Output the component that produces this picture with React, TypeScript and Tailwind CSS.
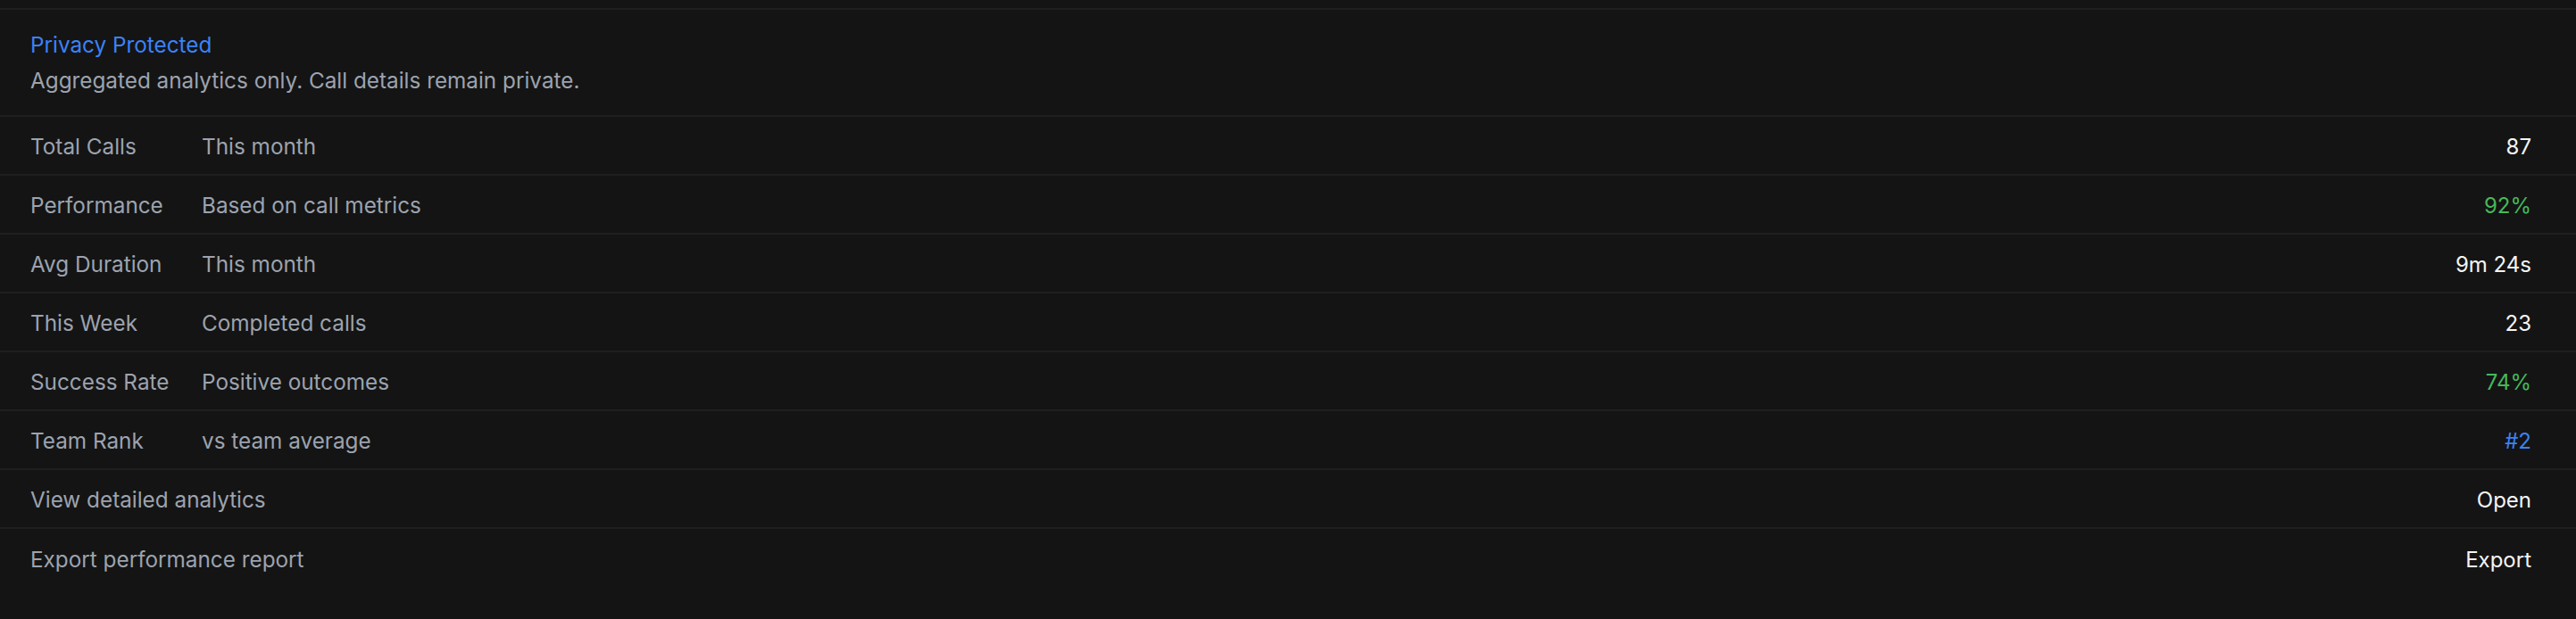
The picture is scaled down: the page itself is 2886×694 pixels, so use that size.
import React from 'react';

type Row = {
  label: string;
  hint?: string;
  value: string;
  tone?: 'white' | 'green' | 'blue';
};

const rows: Row[] = [
  { label: 'Total Calls', hint: 'This month', value: '87' },
  { label: 'Performance', hint: 'Based on call metrics', value: '92%', tone: 'green' },
  { label: 'Avg Duration', hint: 'This month', value: '9m 24s' },
  { label: 'This Week', hint: 'Completed calls', value: '23' },
  { label: 'Success Rate', hint: 'Positive outcomes', value: '74%', tone: 'green' },
  { label: 'Team Rank', hint: 'vs team average', value: '#2', tone: 'blue' },
  { label: 'View detailed analytics', value: 'Open' },
  { label: 'Export performance report', value: 'Export' },
];

const toneClass = {
  white: 'text-[#f4f4f5]',
  green: 'text-[#46b85a]',
  blue: 'text-[#3b82f6]',
};

export default function App() {
  return (
    <div className="w-full h-[694px] bg-[#141414] pt-[9px] font-['Inter',sans-serif]">
      <div className="border-t-2 border-[#1f1f1f]">
        <div className="h-[120px] px-[34px] pt-[19px] border-b-2 border-[#1f1f1f] text-[24.3px] leading-[40px]">
          <div className="text-[#3b82f6]">Privacy Protected</div>
          <div className="text-[#9ca3af]">Aggregated analytics only. Call details remain private.</div>
        </div>

        {rows.map((row, i) => (
          <div
            key={row.label}
            className={`h-[66px] flex items-center pl-[34px] pr-[50px] pt-[3px] ${i < rows.length - 1 ? 'border-b-2 border-[#1f1f1f]' : ''}`}
          >
            <div className="flex-1 flex items-center text-[24.3px] text-[#9ca3af] whitespace-nowrap">
              {row.hint ? (
                <>
                  <span className="w-[192px]">{row.label}</span>
                  <span>{row.hint}</span>
                </>
              ) : (
                <span>{row.label}</span>
              )}
            </div>
            <span className={`text-[24px] ${toneClass[row.tone ?? 'white']}`}>
              {row.value}
            </span>
          </div>
        ))}
      </div>
    </div>
  );
}
